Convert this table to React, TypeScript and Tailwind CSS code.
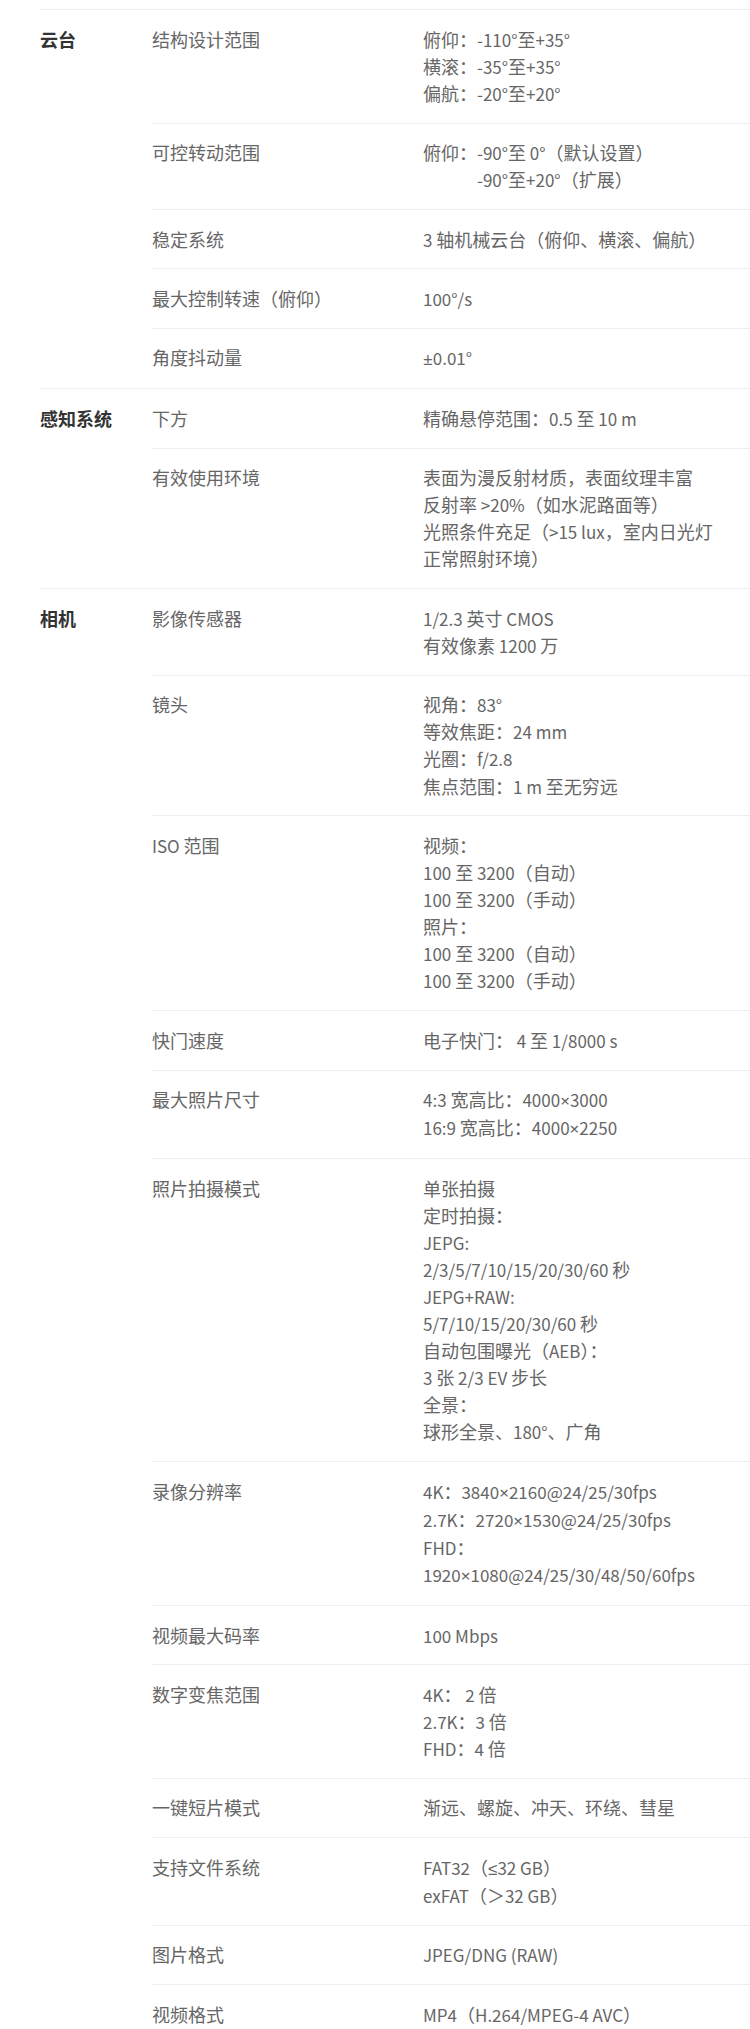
type Row = { label: string; lines: string[]; indent?: number[] }
type Section = { cat: string; rows: Row[] }

const specs: Section[] = [
  {
    cat: '云台',
    rows: [
      { label: '结构设计范围', lines: ['俯仰：-110°至+35°', '横滚：-35°至+35°', '偏航：-20°至+20°'] },
      { label: '可控转动范围', lines: ['俯仰：-90°至 0°（默认设置）', '-90°至+20°（扩展）'], indent: [1] },
      { label: '稳定系统', lines: ['3 轴机械云台（俯仰、横滚、偏航）'] },
      { label: '最大控制转速（俯仰）', lines: ['100°/s'] },
      { label: '角度抖动量', lines: ['±0.01°'] },
    ],
  },
  {
    cat: '感知系统',
    rows: [
      { label: '下方', lines: ['精确悬停范围：0.5 至 10 m'] },
      {
        label: '有效使用环境',
        lines: ['表面为漫反射材质，表面纹理丰富', '反射率 >20%（如水泥路面等）', '光照条件充足（>15 lux，室内日光灯', '正常照射环境）'],
      },
    ],
  },
  {
    cat: '相机',
    rows: [
      { label: '影像传感器', lines: ['1/2.3 英寸 CMOS', '有效像素 1200 万'] },
      { label: '镜头', lines: ['视角：83°', '等效焦距：24 mm', '光圈：f/2.8', '焦点范围：1 m 至无穷远'] },
      {
        label: 'ISO 范围',
        lines: ['视频：', '100 至 3200（自动）', '100 至 3200（手动）', '照片：', '100 至 3200（自动）', '100 至 3200（手动）'],
      },
      { label: '快门速度', lines: ['电子快门： 4 至 1/8000 s'] },
      { label: '最大照片尺寸', lines: ['4:3 宽高比：4000×3000', '16:9 宽高比：4000×2250'] },
      {
        label: '照片拍摄模式',
        lines: [
          '单张拍摄',
          '定时拍摄：',
          'JEPG:',
          '2/3/5/7/10/15/20/30/60 秒',
          'JEPG+RAW:',
          '5/7/10/15/20/30/60 秒',
          '自动包围曝光（AEB）：',
          '3 张 2/3 EV 步长',
          '全景：',
          '球形全景、180°、广角',
        ],
      },
      {
        label: '录像分辨率',
        lines: ['4K：3840×2160@24/25/30fps', '2.7K：2720×1530@24/25/30fps', 'FHD：', '1920×1080@24/25/30/48/50/60fps'],
      },
      { label: '视频最大码率', lines: ['100 Mbps'] },
      { label: '数字变焦范围', lines: ['4K： 2 倍', '2.7K：3 倍', 'FHD：4 倍'] },
      { label: '一键短片模式', lines: ['渐远、螺旋、冲天、环绕、彗星'] },
      { label: '支持文件系统', lines: ['FAT32（≤32 GB）', 'exFAT（＞32 GB）'] },
      { label: '图片格式', lines: ['JPEG/DNG (RAW)'] },
      { label: '视频格式', lines: ['MP4（H.264/MPEG-4 AVC）'] },
    ],
  },
]

// Chinese runs render a size up; latin stays narrower like the source.
// ×, ± and ≤ come out full-width in the CJK font, so they get a latin face.
function Mixed({ text }: { text: string }) {
  const parts = text.split(/([\u3000-\u303f\u4e00-\u9fff\uff00-\uffef]+|[×±≤])/)
  return (
    <>
      {parts.map((p, i) => {
        if (i % 2 === 0) return p
        if ('×±≤'.includes(p)) {
          return (
            <span key={i} className="font-['Noto_Sans',sans-serif]">
              {p}
            </span>
          )
        }
        return (
          <span key={i} className="text-[18px]">
            {p}
          </span>
        )
      })}
    </>
  )
}

export default function App() {
  return (
    <div className="min-h-screen w-[750px] overflow-hidden bg-white pl-[40px] pt-[9px] font-['Noto_Sans_CJK_SC',sans-serif] text-[17px] leading-[27.1px] text-[#666]">
      {specs.map((section) => (
        <div key={section.cat} className="flex border-t border-[#eeeeee]">
          <div className="w-[112px] shrink-0 py-[15.65px] text-[18px] font-bold text-[#333]">{section.cat}</div>
          <div className="flex-1">
            {section.rows.map((row, i) => (
              <div key={row.label} className={`flex py-[15.65px] ${i > 0 ? 'border-t border-[#eeeeee]' : ''}`}>
                <div className="w-[271px] shrink-0">
                  <Mixed text={row.label} />
                </div>
                <div className="flex-1 whitespace-nowrap">
                  {row.lines.map((line, j) => (
                    <div key={j} className={row.indent?.includes(j) ? 'pl-[54px]' : ''}>
                      <Mixed text={line} />
                    </div>
                  ))}
                </div>
              </div>
            ))}
          </div>
        </div>
      ))}
    </div>
  )
}
